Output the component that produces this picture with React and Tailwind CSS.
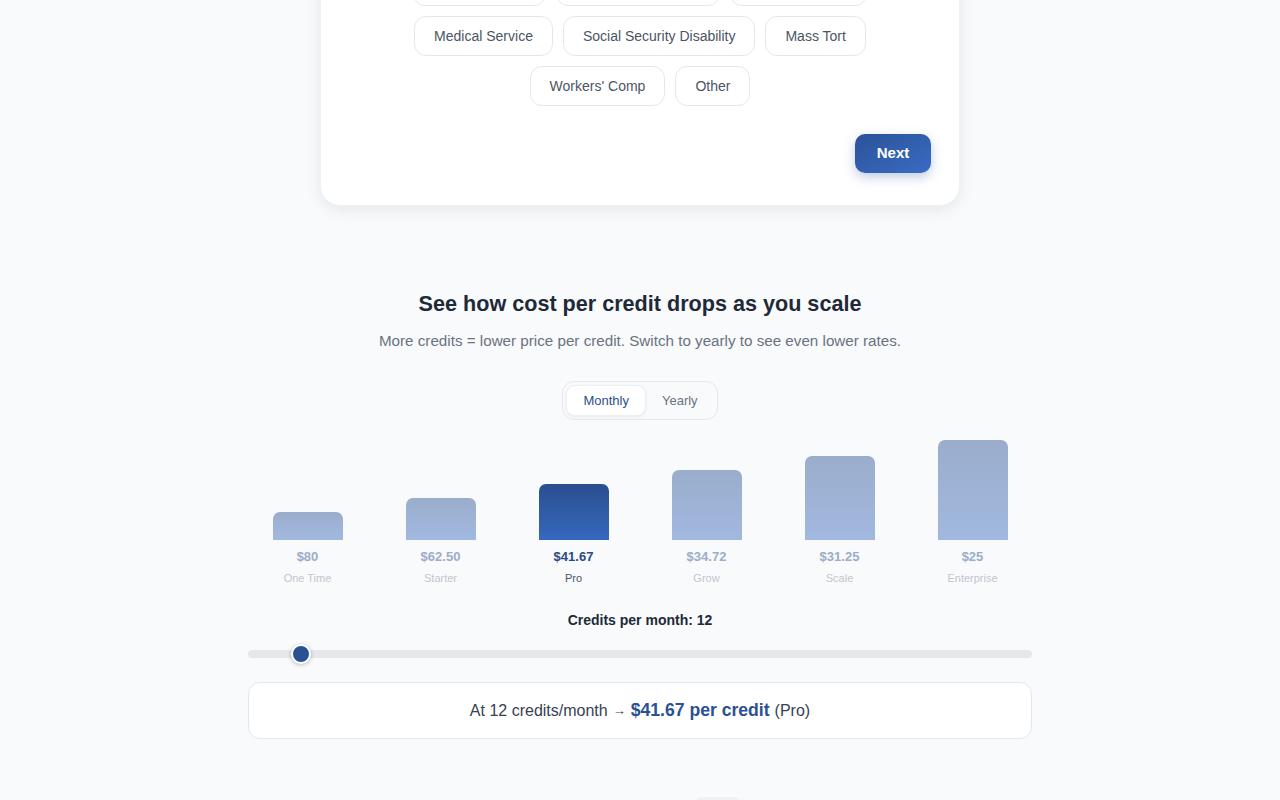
import { useState } from 'react'

const CASE_TYPES = [
  'Auto Accidents',
  'Motorcycle Accident',
  'Wrongful Death',
  'Medical Service',
  'Social Security Disability',
  'Mass Tort',
  "Workers' Comp",
  'Other',
]

const PLANS = [
  { key: 'one', label: 'One Time',   price: '$80',    height: 28 },
  { key: 'starter', label: 'Starter', price: '$62.50', height: 42 },
  { key: 'pro', label: 'Pro',         price: '$41.67', height: 56 },
  { key: 'grow', label: 'Grow',       price: '$34.72', height: 70 },
  { key: 'scale', label: 'Scale',     price: '$31.25', height: 84 },
  { key: 'ent', label: 'Enterprise',  price: '$25',    height: 100 },
]

function Bar({ plan, active }) {
  return (
    <div className="flex flex-col items-center">
      <div className="h-[100px] flex items-end">
        <div
          className={`w-[70px] rounded-t-[7px] ${active
            ? 'bg-gradient-to-b from-[#2a4f8f] to-[#3668be]'
            : 'bg-gradient-to-b from-[#9aadcb] to-[#a1b8e0]'}`}
          style={{ height: plan.height }}
        />
      </div>
      <span className={`mt-2 text-[13px] leading-[18px] font-bold ${active ? 'text-[#2b4a7e]' : 'text-[#9cadc9]'}`}>
        {plan.price}
      </span>
      <span className={`mt-1 text-[11px] leading-4 ${active ? 'text-[#4b5563]' : 'text-[#c2c6cd]'}`}>
        {plan.label}
      </span>
    </div>
  )
}

export default function App() {
  const [period, setPeriod] = useState('monthly')
  const [caseType, setCaseType] = useState(null)

  return (
    <div className="min-h-screen bg-[#f8fafc] font-['Liberation_Sans',Arial,sans-serif] overflow-hidden">
      {/* Intake card */}
      <div className="w-[640px] mx-auto -mt-[67px] bg-white rounded-[20px] shadow-[0_4px_16px_rgba(15,23,42,0.08)] border border-[#eef0f3] pt-8 px-7 pb-8 flex flex-col">
        <div className="flex flex-wrap justify-center gap-[10px]">
          {CASE_TYPES.map(t => (
            <button
              key={t}
              onClick={() => setCaseType(t)}
              className={`h-10 px-[19px] rounded-xl border bg-white text-[14px] text-[#4b5563] ${caseType === t ? 'border-[#2b5192]' : 'border-[#e5e7eb]'}`}
            >
              {t}
            </button>
          ))}
        </div>
        <button className="self-end mt-7 h-[39px] w-[76px] rounded-[10px] bg-gradient-to-br from-[#2a5298] to-[#3a6cc4] text-white text-[15px] font-bold shadow-[0_4px_12px_rgba(42,82,152,0.3)]">
          Next
        </button>
      </div>

      {/* Cost per credit */}
      <section className="w-[784px] mx-auto mt-[84px] flex flex-col items-center">
        <h2 className="text-[21.6px] leading-7 font-bold text-[#1f2937]">
          See how cost per credit drops as you scale
        </h2>
        <p className="mt-3 text-[15.2px] leading-[22px] text-[#6b7280]">
          More credits = lower price per credit. Switch to yearly to see even lower rates.
        </p>

        <div className="mt-[29px] flex p-[3px] rounded-xl border border-[#e5e7eb] bg-[#f8fafc]">
          <button
            onClick={() => setPeriod('monthly')}
            className={`h-[31px] px-4 rounded-[9px] text-[13px] ${period === 'monthly' ? 'bg-white text-[#2b4f8a] shadow-[0_1px_3px_rgba(0,0,0,0.08)] border border-[#eef0f3]' : 'text-[#6b7280]'}`}
          >
            Monthly
          </button>
          <button
            onClick={() => setPeriod('yearly')}
            className={`h-[31px] px-4 rounded-[9px] text-[13px] ${period === 'yearly' ? 'bg-white text-[#2b4f8a] shadow-[0_1px_3px_rgba(0,0,0,0.08)]' : 'text-[#6b7280]'}`}
          >
            Yearly
          </button>
        </div>

        <div className="mt-5 w-full grid grid-cols-6 gap-[14px]">
          {PLANS.map(p => <Bar key={p.key} plan={p} active={p.key === 'pro'} />)}
        </div>

        <p className="mt-6 text-[14px] leading-5 font-bold text-[#1f2937]">Credits per month: 12</p>

        <div className="mt-5 w-full h-2 rounded-full bg-[#e5e7eb] relative">
          <div className="absolute left-[43px] -top-[6px] w-5 h-5 rounded-full bg-[#2b5192] border-2 border-white shadow-[0_1px_4px_rgba(0,0,0,0.25)]" />
        </div>

        <div className="mt-6 w-full h-[57px] rounded-xl border border-[#e5e7eb] bg-white flex items-center justify-center text-[16px] text-[#374151]">
          <span>At 12 credits/month</span>
          <span className="mx-[5px] text-[13px]">→</span>
          <span className="text-[17.6px] font-bold text-[#2b5192]">$41.67 per credit</span>
          <span className="ml-[5px]">(Pro)</span>
        </div>

        <div className="self-start ml-[448px] mt-[58px] w-[44px] h-8 rounded-md bg-[#eff1f3]" />
      </section>
    </div>
  )
}
